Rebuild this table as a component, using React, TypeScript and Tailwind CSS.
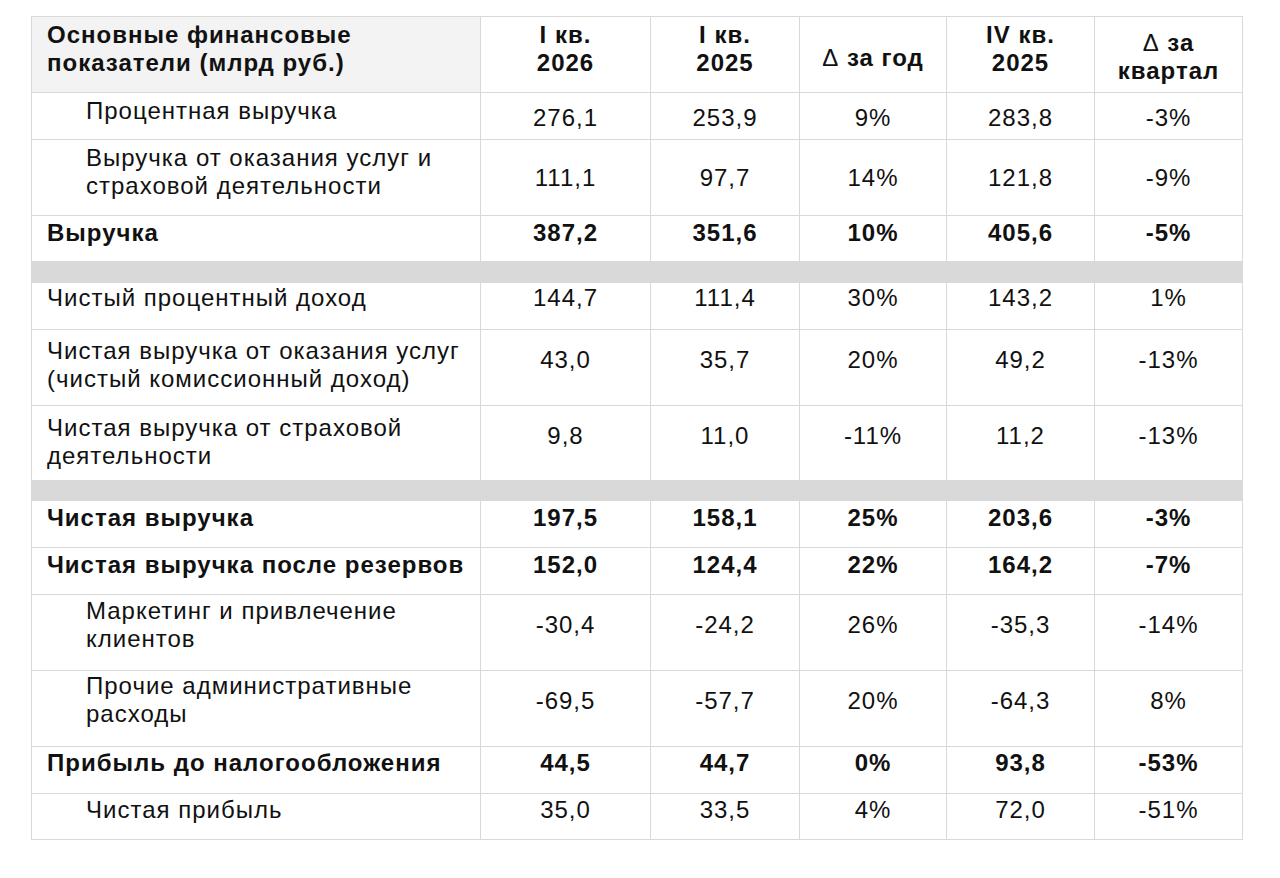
import React from 'react';

type Row =
  | { kind: 'band'; h: string }
  | {
      kind: 'data';
      label: string;
      values: string[];
      bold?: boolean;
      indent?: boolean;
      h: string;
      lp: string;
      np: string;
    };

const rows: Row[] = [
  { kind: 'data', label: 'Процентная выручка', values: ['276,1', '253,9', '9%', '283,8', '-3%'], indent: true, h: 'h-[47px]', lp: 'pt-[4px]', np: 'pt-[11px]' },
  { kind: 'data', label: 'Выручка от оказания услуг и страховой деятельности', values: ['111,1', '97,7', '14%', '121,8', '-9%'], indent: true, h: 'h-[76px]', lp: 'pt-[4px]', np: 'pt-[24px]' },
  { kind: 'data', label: 'Выручка', values: ['387,2', '351,6', '10%', '405,6', '-5%'], bold: true, h: 'h-[46px]', lp: 'pt-[3px]', np: 'pt-[3px]' },
  { kind: 'band', h: 'h-[21px]' },
  { kind: 'data', label: 'Чистый процентный доход', values: ['144,7', '111,4', '30%', '143,2', '1%'], h: 'h-[47px]', lp: 'pt-[1px]', np: 'pt-[1px]' },
  { kind: 'data', label: 'Чистая выручка от оказания услуг (чистый комиссионный доход)', values: ['43,0', '35,7', '20%', '49,2', '-13%'], h: 'h-[76px]', lp: 'pt-[7px]', np: 'pt-[16px]' },
  { kind: 'data', label: 'Чистая выручка от страховой деятельности', values: ['9,8', '11,0', '-11%', '11,2', '-13%'], h: 'h-[75px]', lp: 'pt-[8px]', np: 'pt-[16px]' },
  { kind: 'band', h: 'h-[20px]' },
  { kind: 'data', label: 'Чистая выручка', values: ['197,5', '158,1', '25%', '203,6', '-3%'], bold: true, h: 'h-[47px]', lp: 'pt-[3px]', np: 'pt-[3px]' },
  { kind: 'data', label: 'Чистая выручка после резервов', values: ['152,0', '124,4', '22%', '164,2', '-7%'], bold: true, h: 'h-[47px]', lp: 'pt-[3px]', np: 'pt-[3px]' },
  { kind: 'data', label: 'Маркетинг и привлечение клиентов', values: ['-30,4', '-24,2', '26%', '-35,3', '-14%'], indent: true, h: 'h-[76px]', lp: 'pt-[2px]', np: 'pt-[16px]' },
  { kind: 'data', label: 'Прочие административные расходы', values: ['-69,5', '-57,7', '20%', '-64,3', '8%'], indent: true, h: 'h-[76px]', lp: 'pt-[1px]', np: 'pt-[16px]' },
  { kind: 'data', label: 'Прибыль до налогообложения', values: ['44,5', '44,7', '0%', '93,8', '-53%'], bold: true, h: 'h-[47px]', lp: 'pt-[2px]', np: 'pt-[2px]' },
  { kind: 'data', label: 'Чистая прибыль', values: ['35,0', '33,5', '4%', '72,0', '-51%'], indent: true, h: 'h-[46px]', lp: 'pt-[2px]', np: 'pt-[2px]' },
];

const cell = 'border-r border-b border-[#d9d9d9]';

export default function App() {
  return (
    <div
      className="min-h-[878px] bg-white pl-[31px] pt-[16px] text-[24px] leading-[28px] tracking-[1px] text-[#111]"
      style={{ fontFamily: '"Liberation Sans", Arial, sans-serif' }}
    >
      <div className="grid w-[1212px] grid-cols-[449px_170px_149px_147px_148px_148px] border-l border-t border-[#d9d9d9]">
        {/* Header */}
        <div className={`${cell} h-[76px] bg-[#f3f3f3] pl-[15px] pt-[4px] font-bold`}>
          Основные финансовые
          <br />
          показатели (млрд руб.)
        </div>
        <div className={`${cell} h-[76px] pt-[4px] text-center font-bold`}>
          I кв.
          <br />
          2026
        </div>
        <div className={`${cell} h-[76px] pt-[4px] text-center font-bold`}>
          I кв.
          <br />
          2025
        </div>
        <div className={`${cell} h-[76px] pt-[27px] text-center font-bold`}>
          <span className="font-normal">Δ</span> за год
        </div>
        <div className={`${cell} h-[76px] pt-[4px] text-center font-bold`}>
          IV кв.
          <br />
          2025
        </div>
        <div className={`${cell} h-[76px] pt-[12px] text-center font-bold`}>
          <span className="font-normal">Δ</span> за
          <br />
          квартал
        </div>

        {rows.map((r, i) =>
          r.kind === 'band' ? (
            <div key={i} className={`col-span-6 border-r border-[#d9d9d9] bg-[#d9d9d9] ${r.h}`} />
          ) : (
            <React.Fragment key={i}>
              <div
                className={`${cell} ${r.h} ${r.lp} ${r.indent ? 'pl-[54px]' : 'pl-[15px]'} pr-[8px] ${
                  r.bold ? 'font-bold' : ''
                }`}
              >
                {r.label}
              </div>
              {r.values.map((v, j) => (
                <div key={j} className={`${cell} ${r.h} ${r.np} text-center ${r.bold ? 'font-bold' : ''}`}>
                  {v}
                </div>
              ))}
            </React.Fragment>
          )
        )}
      </div>
    </div>
  );
}
